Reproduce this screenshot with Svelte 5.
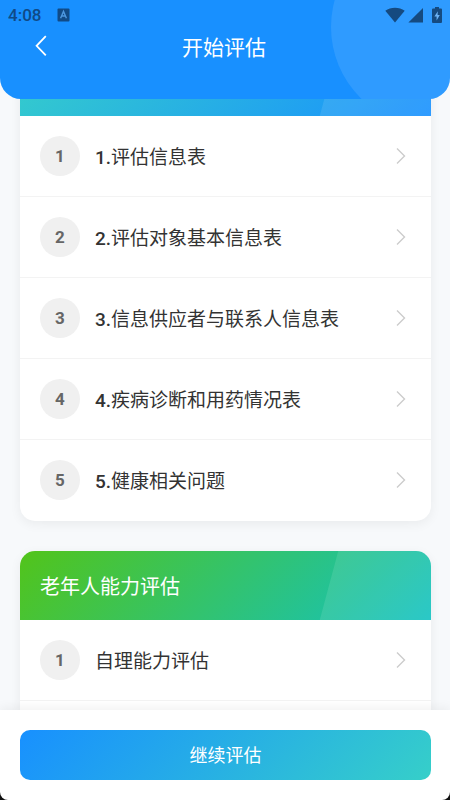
<script lang="ts">
  interface Item {
    no?: string;
    name: string;
  }

  interface Section {
    title: string;
    theme: 'blue' | 'green';
    open?: boolean;
    items: Item[];
  }

  const sections: Section[] = [
    {
      title: '',
      theme: 'blue',
      items: [
        { no: '1.', name: '评估信息表' },
        { no: '2.', name: '评估对象基本信息表' },
        { no: '3.', name: '信息供应者与联系人信息表' },
        { no: '4.', name: '疾病诊断和用药情况表' },
        { no: '5.', name: '健康相关问题' },
      ],
    },
    {
      title: '老年人能力评估',
      theme: 'green',
      open: true,
      items: [{ name: '自理能力评估' }],
    },
  ];

  let current = $state('');
</script>

<div class="screen">
  <header class="top">
    <div class="status">
      <span class="time">4:08</span>
      <svg class="app-icon" width="13" height="14" viewBox="0 0 13 14">
        <rect x="0.5" y="0.5" width="12" height="13" rx="1" fill="#104a86" />
        <path d="M3.6 10.2 6.5 3.4l2.9 6.8M4.6 8h3.8" fill="none" stroke="#4c97df" stroke-width="1.4" />
      </svg>
      <div class="signals">
        <svg width="20" height="16" viewBox="0 0 20 16">
          <path d="M0.3 3.8C5.6 -0.3 14.4 -0.3 19.7 3.8L10 15.6Z" fill="#154a80" />
        </svg>
        <svg width="15" height="16" viewBox="0 0 15 16">
          <path d="M15 1v14.5H0.4Z" fill="#154a80" />
        </svg>
        <svg class="battery" width="10" height="16" viewBox="0 0 10 16">
          <path d="M3 0h4v1.6h2q1 0 1 1V15q0 1-1 1H1q-1 0-1-1V2.6q0-1 1-1h2Z" fill="#154a80" />
          <path d="M5.8 4.2 2.4 9.4h2.2v4L7.8 8H5.6Z" fill="#6db3f5" />
        </svg>
      </div>
    </div>
    <div class="nav">
      <button class="back" aria-label="返回">
        <svg width="12" height="22" viewBox="0 0 12 22">
          <path d="M10.8 1.2 1.6 10.8l9.2 9.6" fill="none" stroke="#fff" stroke-width="1.8" />
        </svg>
      </button>
      <h1>开始评估</h1>
    </div>
  </header>

  <main>
    {#each sections as s}
      <section class="card" class:open={s.open}>
        <h2 class="card-head {s.theme}">{s.title}</h2>
        <ul>
          {#each s.items as item, i}
            <li>
              <button class="row" onclick={() => (current = item.name)}>
                <span class="badge">{i + 1}</span>
                <span class="label">{#if item.no}<span class="no">{item.no}</span>{/if}{item.name}</span>
                <svg width="10" height="18" viewBox="0 0 10 18">
                  <path d="M1 1.5 8.5 9 1 16.5" fill="none" stroke="#ccc" stroke-width="1.4" />
                </svg>
              </button>
            </li>
          {/each}
        </ul>
      </section>
    {/each}
  </main>

  <footer>
    <button class="go">继续评估</button>
  </footer>
</div>

<style>
  :global(body) { margin: 0; }
  .screen {
    height: 100vh;
    display: flex;
    flex-direction: column;
    background: #111;
    color: #333;
    font-family: Roboto, "Noto Sans CJK SC", sans-serif;
  }
  button {
    border: none; background: none; padding: 0;
    font: inherit; color: inherit; cursor: pointer;
  }
  h1, h2, ul { margin: 0; padding: 0; font-weight: 400; list-style: none; }
  svg { display: block; flex: none; }

  .top {
    position: relative;
    z-index: 2;
    flex: none;
    height: 99px;
    overflow: hidden;
    background: #1890ff;
    border-radius: 0 0 21px 21px;
    color: #fff;
  }
  .top::before {
    content: '';
    position: absolute;
    top: -73px; right: -81px;
    width: 200px; height: 200px;
    border-radius: 50%;
    background: rgba(255, 255, 255, 0.1);
  }
  .status {
    position: relative;
    display: flex;
    align-items: center;
    height: 30px;
    padding: 0 8px;
    color: #104a86;
  }
  .time { font-size: 17px; font-weight: 500; line-height: 32px; }
  .app-icon { margin-left: 16px; }
  .signals { display: flex; gap: 3px; margin-left: auto; }
  .battery { margin-left: 6px; }
  .nav {
    position: relative;
    display: grid;
    grid-template-columns: 60px 1fr 62px;
    align-items: start;
  }
  .back { display: flex; padding: 5px 0 5px 35px; }
  .nav h1 { font-size: 21px; line-height: 36px; text-align: center; }

  main {
    flex: 1;
    min-height: 0;
    margin-top: -52px;
    padding: 0 19px 0 20px;
    display: flex;
    flex-direction: column;
    gap: 30px;
    overflow: hidden auto;
    scrollbar-width: none;
    background: #f7f9fb;
  }
  .card {
    flex: none;
    border-radius: 15px;
    background: #fff;
    box-shadow: 0 3px 12px rgba(0, 0, 0, 0.06);
  }
  .card.open { flex: 1 0 auto; border-radius: 15px 15px 0 0; }
  .card-head {
    position: relative;
    height: 69px;
    padding: 0 20px;
    overflow: hidden;
    border-radius: 15px 15px 0 0;
    color: #fff;
    font-size: 20px;
    line-height: 72px;
  }
  .card-head::after {
    content: '';
    position: absolute;
    top: 0; right: -20px; bottom: 0;
    width: 122px;
    background: rgba(255, 255, 255, 0.1);
    transform: skewX(-15deg);
  }
  .blue { background: linear-gradient(135deg, #36cfc9, #1890ff); }
  .green { background: linear-gradient(135deg, #52c41a, #13c2c2); }

  li { border-bottom: 1px solid #f3f3f3; }
  .card:not(.open) li:last-child { border-color: transparent; }
  .row {
    display: flex;
    align-items: center;
    gap: 15px;
    width: 100%;
    height: 80px;
    padding: 0 25px 0 20px;
    text-align: left;
  }
  .badge {
    flex: none;
    width: 40px; height: 40px;
    border-radius: 50%;
    background: #f0f0f0;
    color: #666;
    font-size: 17px;
    font-weight: 700;
    line-height: 40px;
    text-align: center;
  }
  .label { flex: 1; padding-top: 4px; font-size: 19px; line-height: 28px; }
  .no { font-weight: 500; }

  footer {
    position: relative;
    z-index: 2;
    flex: none;
    padding: 20px 19px 20px 20px;
    background: #fff;
    border-radius: 0 0 8px 8px;
    box-shadow: 0 -2px 12px rgba(0, 0, 0, 0.06);
  }
  .go {
    display: block;
    width: 100%;
    height: 50px;
    padding-bottom: 2px;
    border-radius: 10px;
    background: linear-gradient(135deg, #1890ff, #36cfc9);
    color: #fff;
    font-size: 18px;
  }
</style>
